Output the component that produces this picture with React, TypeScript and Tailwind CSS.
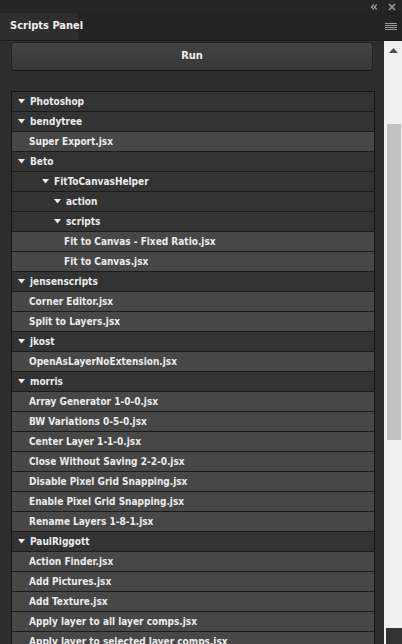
import { ChevronsLeft, X } from "lucide-react";

type Row = { label: string; folder?: boolean; pad: number };

const rows: Row[] = [
  { label: "Photoshop", folder: true, pad: 6 },
  { label: "bendytree", folder: true, pad: 6 },
  { label: "Super Export.jsx", pad: 17 },
  { label: "Beto", folder: true, pad: 6 },
  { label: "FitToCanvasHelper", folder: true, pad: 30 },
  { label: "action", folder: true, pad: 42 },
  { label: "scripts", folder: true, pad: 42 },
  { label: "Fit to Canvas - Fixed Ratio.jsx", pad: 52 },
  { label: "Fit to Canvas.jsx", pad: 52 },
  { label: "jensenscripts", folder: true, pad: 6 },
  { label: "Corner Editor.jsx", pad: 17 },
  { label: "Split to Layers.jsx", pad: 17 },
  { label: "jkost", folder: true, pad: 6 },
  { label: "OpenAsLayerNoExtension.jsx", pad: 17 },
  { label: "morris", folder: true, pad: 6 },
  { label: "Array Generator 1-0-0.jsx", pad: 17 },
  { label: "BW Variations 0-5-0.jsx", pad: 17 },
  { label: "Center Layer 1-1-0.jsx", pad: 17 },
  { label: "Close Without Saving 2-2-0.jsx", pad: 17 },
  { label: "Disable Pixel Grid Snapping.jsx", pad: 17 },
  { label: "Enable Pixel Grid Snapping.jsx", pad: 17 },
  { label: "Rename Layers 1-8-1.jsx", pad: 17 },
  { label: "PaulRiggott", folder: true, pad: 6 },
  { label: "Action Finder.jsx", pad: 17 },
  { label: "Add Pictures.jsx", pad: 17 },
  { label: "Add Texture.jsx", pad: 17 },
  { label: "Apply layer to all layer comps.jsx", pad: 17 },
  { label: "Apply layer to selected layer comps.jsx", pad: 17 },
];

function Caret() {
  return (
    <svg width="7" height="5" viewBox="0 0 7 5" className="mr-[5px] shrink-0">
      <polygon points="0,0 7,0 3.5,4.5" fill="#ececec" />
    </svg>
  );
}

export default function App() {
  return (
    <div
      className="w-[402px] h-[644px] overflow-hidden flex flex-col bg-[#2e2e2e] text-[#ececec] font-bold text-[10px]"
      style={{ fontFamily: "'DejaVu Sans Condensed', 'Liberation Sans', sans-serif" }}
    >
      {/* title strip */}
      <div className="h-[13px] shrink-0 bg-[#252525] flex items-center justify-end gap-[8px] pr-[5px]">
        <ChevronsLeft className="w-[10px] h-[10px] text-[#a8a8a8]" strokeWidth={3} />
        <X className="w-[10px] h-[10px] text-[#9a9a9a]" strokeWidth={4} />
      </div>

      {/* tab row */}
      <div className="h-[28px] shrink-0 flex bg-[#232323] border-b border-[#1c1c1c]">
        <div className="w-[78px] bg-[#2e2e2e] flex items-center pl-[10px] whitespace-nowrap text-[11px] text-[#f0f0f0]">
          Scripts Panel
        </div>
        <div className="flex-1" />
        <div className="w-[12px] flex flex-col justify-center gap-[1px] mr-[5px]">
          <div className="h-[1px] bg-[#9a9a9a]" />
          <div className="h-[1px] bg-[#9a9a9a]" />
          <div className="h-[1px] bg-[#9a9a9a]" />
          <div className="h-[1px] bg-[#9a9a9a]" />
        </div>
      </div>

      <div className="flex-1 flex min-h-0">
        {/* panel content */}
        <div className="flex-1 min-w-0 flex flex-col">
          <button className="shrink-0 ml-[11px] mt-[1px] w-[362px] h-[29px] rounded-[3px] bg-gradient-to-b from-[#434343] to-[#383838] border border-[#232323] border-b-[#171717] text-[11px] text-[#f0f0f0]">
            Run
          </button>

          <div className="shrink-0 ml-[11px] mt-[20px] w-[364px] border-l border-r border-t border-[#141414]">
            {rows.map((r) => (
              <div
                key={r.label}
                className={
                  "h-[20px] flex items-center border-b border-[#1b1b1b] whitespace-nowrap " +
                  (r.folder ? "bg-[#333333]" : "bg-[#474747]")
                }
                style={{ paddingLeft: r.pad }}
              >
                {r.folder && <Caret />}
                <span>{r.label}</span>
              </div>
            ))}
          </div>
        </div>

        {/* scrollbar */}
        <div className="w-[18px] bg-[#f0f0f0] flex flex-col items-center relative">
          <svg width="9" height="5" viewBox="0 0 9 5" className="mt-[7px] shrink-0">
            <polygon points="4.5,0 9,5 0,5" fill="#505050" />
          </svg>
          <div className="w-[14px] h-[316px] shrink-0 bg-[#c1c1c1] mt-[71px] ml-[2px]" />
          <div className="absolute right-0 bottom-0 w-[16px] h-[16px] bg-[#333333]" />
        </div>
      </div>
    </div>
  );
}
